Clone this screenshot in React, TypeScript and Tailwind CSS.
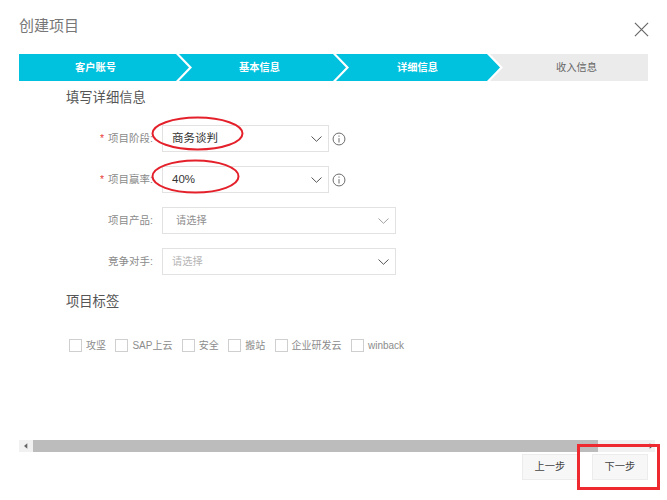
import React from "react";

const font = { fontFamily: '"Liberation Sans", "Noto Sans CJK SC", sans-serif' };

function Chevron({ light }: { light?: boolean }) {
  return (
    <svg viewBox="0 0 11 6" className={`w-[11px] h-[6px] ${light ? "text-[#a0a0a0]" : "text-[#555]"}`} fill="none" stroke="currentColor" strokeWidth="1">
      <path d="M0.5 0.5 L5.5 5.3 L10.5 0.5" />
    </svg>
  );
}

function Info() {
  return (
    <svg viewBox="0 0 16 16" className="w-[14px] h-[14px] ml-[3px] text-[#666]" fill="none" stroke="currentColor" strokeWidth="1.1">
      <circle cx="8" cy="8" r="6.8" />
      <path d="M8 7 V12 M8 4 V5.4" />
    </svg>
  );
}

function Row({ req, label, value, wide, muted, lightChevron, info, pad }: {
  req?: boolean; label: string; value: string; wide?: boolean; muted?: string; lightChevron?: boolean; info?: boolean; pad?: string;
}) {
  return (
    <div className="flex items-center h-[27px]">
      <div className="w-[96px] flex justify-end text-[10.5px] text-[#8a8a8a] pr-[9px] whitespace-nowrap">
        {req && <span className="text-[#e8413a] mr-[4px]">*</span>}
        <span>{label}</span>
      </div>
      <div className={`h-[27px] ${wide ? "w-[234px]" : "w-[167px]"} border border-[#e2e2e2] flex items-center justify-between ${pad ?? "pl-[9px]"} pr-[6px] ${muted ?? "text-[#333] text-[11.5px]"}`}>
        <span>{value}</span>
        <Chevron light={lightChevron} />
      </div>
      {info && <Info />}
    </div>
  );
}

function Check({ label }: { label: string }) {
  return (
    <div className="flex items-center gap-[4px]">
      <span className="w-[13px] h-[13px] border border-[#cfcfcf] bg-white" />
      <span className="text-[10px] text-[#8c8c8c] whitespace-nowrap">{label}</span>
    </div>
  );
}

export default function App() {
  return (
    <div className="relative w-[667px] h-[500px] bg-white overflow-hidden flex flex-col" style={font}>
      <div className="flex items-start justify-between h-[54px] pl-[19px] pr-[18px]">
        <div className="pt-[15px] text-[15px] leading-[22px] text-[#777]">创建项目</div>
        <svg viewBox="0 0 16 16" className="mt-[22px] w-[15px] h-[15px] text-[#666]" fill="none" stroke="currentColor" strokeWidth="1.25">
          <path d="M1 1 L15 15 M15 1 L1 15" />
        </svg>
      </div>

      <div className="mx-[19px] h-[27px] flex text-[10.25px] font-bold text-white">
        <div className="w-[170px] shrink-0 bg-[#00c1de] flex items-center pl-[56px] [clip-path:polygon(0_0,157px_0,170px_50%,157px_100%,0_100%)]">客户账号</div>
        <div className="w-[167px] shrink-0 ml-[-10px] bg-[#00c1de] flex items-center pl-[60px] [clip-path:polygon(0_0,154px_0,167px_50%,154px_100%,0_100%,13px_50%)]">基本信息</div>
        <div className="w-[164px] shrink-0 ml-[-10px] bg-[#00c1de] flex items-center pl-[61px] [clip-path:polygon(0_0,151px_0,164px_50%,151px_100%,0_100%,13px_50%)]">详细信息</div>
        <div className="flex-1 ml-[-10px] bg-[#ebebeb] text-[#666] font-normal flex items-center pl-[66px] [clip-path:polygon(0_0,100%_0,100%_100%,0_100%,13px_50%)]">收入信息</div>
      </div>

      <div className="pl-[66px] pt-[8px] h-[35px] text-[13.3px] leading-[18px] text-[#555]">填写详细信息</div>

      <div className="flex flex-col gap-[14px] pl-[66px] pt-[9px]">
        <Row req label="项目阶段:" value="商务谈判" info />
        <Row req label="项目赢率:" value="40%" info />
        <Row label="项目产品:" value="请选择" wide muted="text-[#8f8f8f] text-[10.25px]" lightChevron pad="pl-[13px]" />
        <Row label="竞争对手:" value="请选择" wide muted="text-[#b5b5b5] text-[10.25px]" pad="pl-[9px]" />
      </div>

      <div className="pl-[66px] pt-[18px] text-[13.3px] leading-[18px] text-[#555]">项目标签</div>

      <div className="flex items-center gap-[9.4px] pl-[69px] pt-[26px] h-[42px]">
        <Check label="攻坚" />
        <Check label="SAP上云" />
        <Check label="安全" />
        <Check label="搬站" />
        <Check label="企业研发云" />
        <Check label="winback" />
      </div>

      <div className="mx-[19px] mt-[87px] h-[12px] w-[636px] flex bg-[#f1f1f1]">
        <div className="w-[14px] flex items-center justify-center">
          <svg viewBox="0 0 6 8" className="w-[4px] h-[6px] text-[#666]" fill="currentColor"><path d="M5 0 V8 L0 4 Z" /></svg>
        </div>
        <div className="w-[565px] bg-[#bcbcbc]" />
        <div className="flex-1 flex items-center justify-end pr-[2px]">
          <svg viewBox="0 0 6 8" className="w-[4px] h-[6px] text-[#555]" fill="currentColor"><path d="M1 0 V8 L6 4 Z" /></svg>
        </div>
      </div>

      <div className="flex justify-end gap-[14px] mt-[2px] pr-[19px]">
        <button className="w-[56px] h-[26px] bg-[#f7f7f7] border border-[#ececec] text-[10.25px] text-[#444]">上一步</button>
        <button className="w-[56px] h-[26px] bg-[#f7f7f7] border border-[#ececec] text-[10.25px] text-[#444]">下一步</button>
      </div>

      {/* hand-drawn annotations lying over the page */}
      <svg className="absolute left-0 top-0 pointer-events-none" width="667" height="500" fill="none" stroke="#e4202a" strokeWidth="2">
        <ellipse cx="197.5" cy="133.5" rx="45" ry="16" />
        <ellipse cx="195.5" cy="176.5" rx="43" ry="16" />
      </svg>
      <div className="absolute left-[577px] top-[444px] w-[83px] h-[46px] border-[3px] border-[#ee2a30]" />
    </div>
  );
}
